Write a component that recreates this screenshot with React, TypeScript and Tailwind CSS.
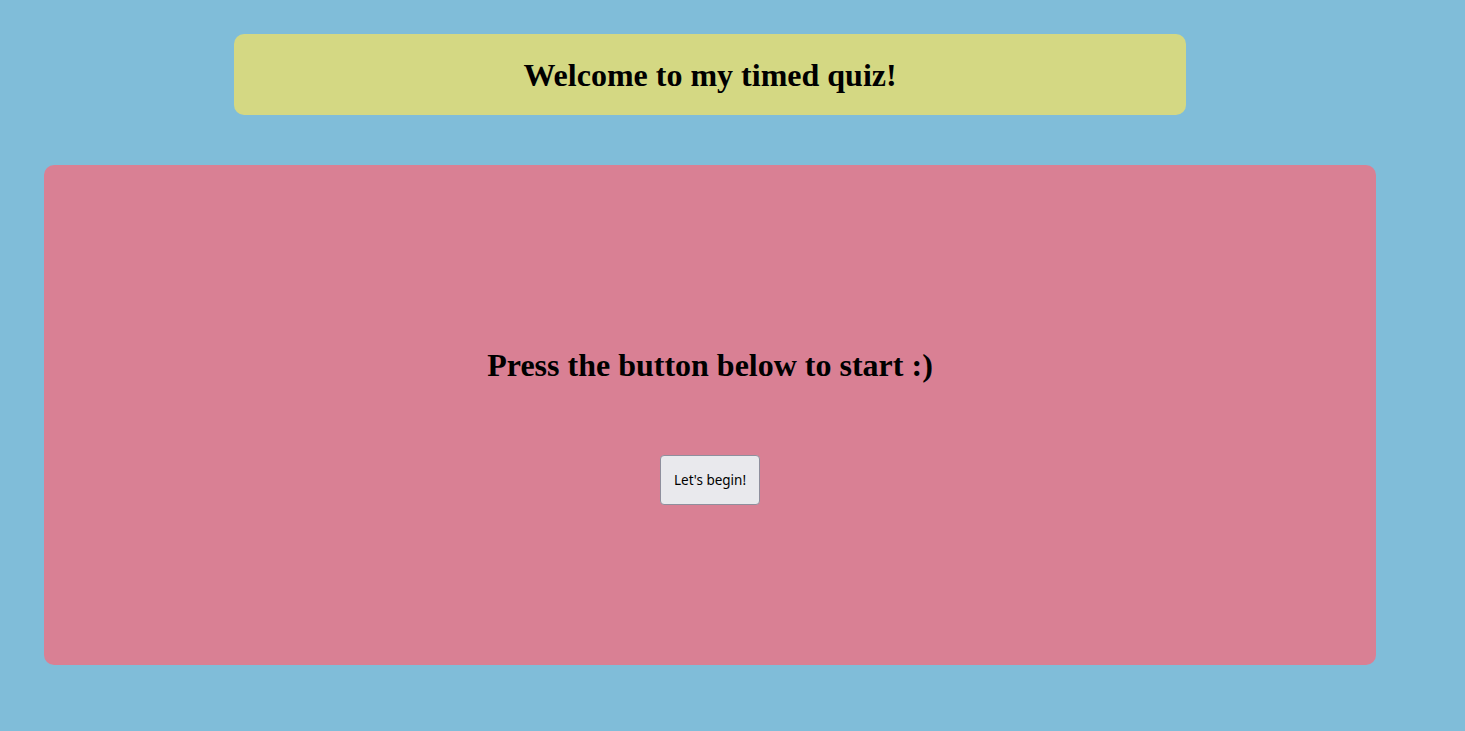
export default function App() {
  return (
    <div className="w-[1465px] h-[731px] bg-[#80bdd9] overflow-hidden flex flex-col" style={{ fontFamily: '"Liberation Serif", serif' }}>
      <div className="mt-[34px] ml-[234px] w-[952px] h-[81px] rounded-[10px] bg-[#d4d883] flex items-center justify-center">
        <h1 className="text-[32px] font-bold text-black leading-none">Welcome to my timed quiz!</h1>
      </div>
      <div className="mt-[50px] ml-[44px] w-[1332px] h-[500px] rounded-[10px] bg-[#d98094] flex flex-col items-center">
        <h2 className="mt-[185px] text-[32px] font-bold text-black leading-[30px] h-[30px]">Press the button below to start :)</h2>
        <button className="mt-[75px] w-[100px] h-[50px] bg-[#e9e9ed] border border-[#8f8f9d] rounded-[4px] text-[13.5px] text-black leading-none pt-[2px]" style={{ fontFamily: '"Noto Sans", sans-serif' }}>Let's begin!</button>
      </div>
    </div>
  );
}
